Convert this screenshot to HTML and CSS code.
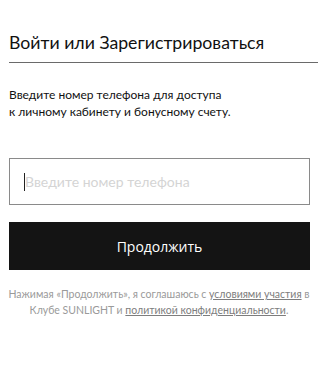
FILE: index.html
```html
<!DOCTYPE html>
<html>
  <head>
    <meta charset="UTF-8">
    <link rel="stylesheet" href="styles.css">
  </head>
  <body>
    <div class="auth">
      <h1 class="auth-title">Войти или Зарегистрироваться</h1>
      <p class="auth-lead">Введите номер телефона для доступа<br>к личному кабинету и бонусному счету.</p>
      <div class="phone-field">
        <span class="caret"></span>
        <input class="phone-input" type="tel" placeholder="Введите номер телефона">
      </div>
      <button class="submit">Продолжить</button>
      <p class="terms">
        Нажимая «Продолжить», я соглашаюсь с <a href="#">условиями участия</a> в
        Клубе SUNLIGHT и <a href="#">политикой конфиденциальности</a>.
      </p>
    </div>
  </body>
</html>
```
FILE: styles.css
```css
body {
  margin: 0;
  background: #fff;
  font-family: Lato, "Noto Sans", sans-serif;
  color: #111;
}
.auth {
  padding: 30px 0 0 9px;
}
.auth-title {
  margin: 0;
  padding-bottom: 7px;
  border-bottom: 1px solid #6a6a6a;
  font-size: 17.7px;
  font-weight: 400;
  line-height: 25px;
}
.auth-lead {
  margin: 23px 0 0;
  font-size: 12px;
  line-height: 17px;
}
.phone-field {
  position: relative;
  width: 301px;
  height: 47px;
  margin-top: 38px;
  border: 1px solid #8a8a8a;
  box-sizing: border-box;
}
.caret {
  position: absolute;
  left: 14px;
  top: 14px;
  width: 1px;
  height: 18px;
  background: #222;
}
.phone-input {
  width: 100%;
  height: 100%;
  box-sizing: border-box;
  border: 0;
  outline: none;
  padding: 0 0 0 15px;
  font-family: inherit;
  font-size: 14px;
  background: transparent;
}
.phone-input::placeholder {
  color: #d4d4d4;
}
.submit {
  display: block;
  width: 301px;
  height: 48px;
  margin-top: 17px;
  border: 0;
  background: #141414;
  color: #fff;
  font-family: "Open Sans", sans-serif;
  font-size: 14px;
  cursor: pointer;
}
.terms {
  margin: 16px 0 0 -9px;
  text-align: center;
  font-size: 10.5px;
  line-height: 16px;
  color: #9a9a9a;
}
.terms a {
  color: #7d7d7d;
  text-decoration: underline;
}
```
